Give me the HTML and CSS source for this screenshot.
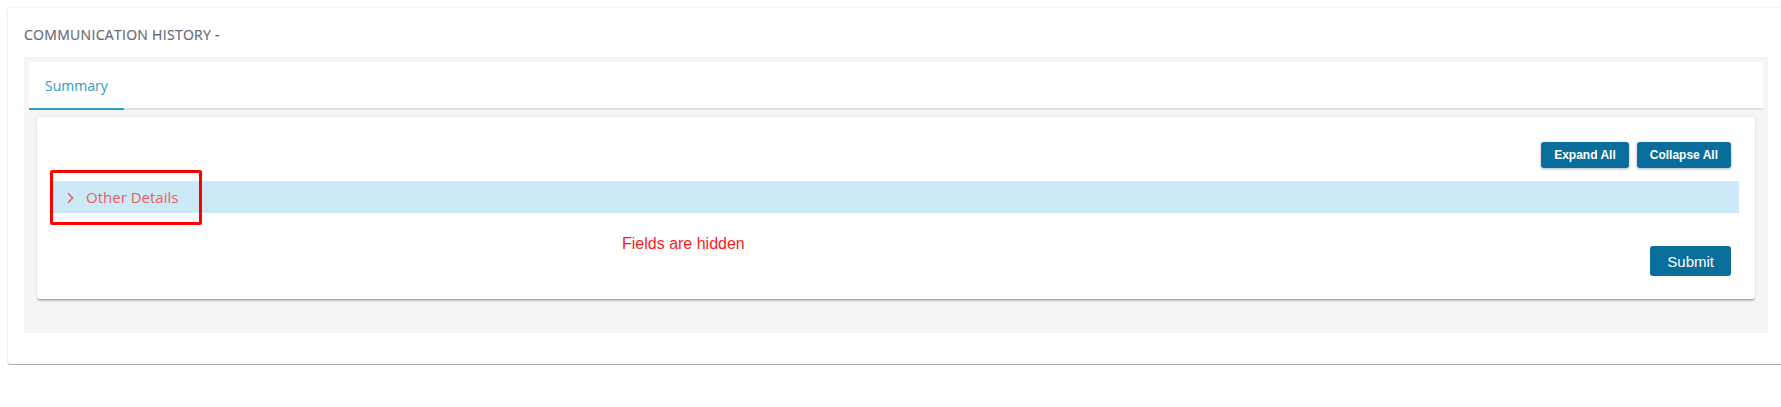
FILE: index.html
```html
<!DOCTYPE html>
<html>
<head>
<meta charset="utf-8">
<link rel="stylesheet" href="styles.css">
</head>
<body>
<div class="page-card">
  <div class="page-title">COMMUNICATION HISTORY -</div>
  <div class="well">
    <div class="tabs">
      <div class="tab active">Summary</div>
    </div>
    <div class="panel">
      <div class="toolbar">
        <button class="btn btn-sm">Expand All</button>
        <button class="btn btn-sm">Collapse All</button>
      </div>
      <div class="section-wrap">
        <div class="section-bar">
          <svg class="chev" width="9" height="12" viewBox="0 0 9 12"><path d="M2 1.2 L6.6 6 L2 10.8" fill="none" stroke="#e8605f" stroke-width="1.6"/></svg>
          <span class="section-label">Other Details</span>
        </div>
        <div class="annot-box"></div>
      </div>
      <div class="footer-row">
        <div class="hidden-note">Fields are hidden</div>
        <button class="btn btn-submit">Submit</button>
      </div>
    </div>
  </div>
</div>
</body>
</html>
```
FILE: styles.css
```css
html {
  overflow: hidden;
}
html, body {
  margin: 0;
  padding: 0;
  background: #ffffff;
}
body {
  padding: 8px 0 0 8px;
  font-family: "Open Sans", "Liberation Sans", sans-serif;
}
.page-card {
  background: #fff;
  border-radius: 3px;
  border-bottom: 1px solid #acacac;
  box-shadow: 0 1px 2px rgba(0,0,0,0.15), 0 0 2px rgba(0,0,0,0.1);
  padding: 17px 17px 31px 16px;
  margin-right: -4px;
  height: 357px;
  box-sizing: border-box;
}
.page-title {
  font-size: 14px;
  line-height: 19px;
  color: #666b75;
  letter-spacing: 0.3px;
  margin-bottom: 13px;
  -webkit-text-stroke: 0.2px #666b75;
}
.well {
  background: #f6f5f4;
  padding: 5px 5px 33px 5px;
}
.tabs {
  background: #fff;
  display: flex;
  border-bottom: 2px solid #dde0e7;
  height: 46px;
}
.tab {
  font-size: 14px;
  color: #2a9cc2;
  padding: 0 16px;
  display: flex;
  align-items: center;
  margin-bottom: -2px;
}
.tab.active {
  border-bottom: 2px solid #27a1c6;
}
.panel {
  background: #fff;
  margin: 7px 8px 0 8px;
  border-radius: 3px;
  border-bottom: 1px solid #a9a9a9;
  box-shadow: 0 1px 2px rgba(0,0,0,0.2), 0 0 2px rgba(0,0,0,0.08);
  padding: 25px 24px 23px 15px;
}
.toolbar {
  display: flex;
  justify-content: flex-end;
  gap: 8px;
  margin-bottom: 13px;
}
.btn {
  background: #0a6e9c;
  color: #fff;
  border: none;
  border-radius: 3px;
  font-family: "Liberation Sans", Arial, sans-serif;
  cursor: pointer;
}
.btn-sm {
  height: 26px;
  font-size: 12px;
  font-weight: bold;
  padding: 0 13px;
  box-shadow: 0 1px 3px rgba(0,0,0,0.3);
}
.section-wrap {
  position: relative;
  margin-right: -8px;
}
.section-bar {
  background: #cbe9f6;
  height: 32px;
  display: flex;
  align-items: center;
  padding-left: 14px;
}
.chev {
  margin-right: 11px;
  margin-top: 1px;
}
.section-label {
  font-size: 15px;
  color: #e8605f;
}
.annot-box {
  position: absolute;
  left: -2px;
  top: -11px;
  width: 152px;
  height: 55px;
  box-sizing: border-box;
  border: 3px solid #ff0000;
  border-radius: 2px;
}
.footer-row {
  display: flex;
  justify-content: space-between;
  align-items: flex-start;
  margin-top: 22px;
}
.hidden-note {
  font-family: "Liberation Sans", Arial, sans-serif;
  font-size: 16px;
  line-height: 18px;
  color: #ff1a1a;
  margin-left: 570px;
}
.btn-submit {
  height: 30px;
  font-size: 15px;
  padding: 0 17px;
  margin-top: 11px;
}
```
